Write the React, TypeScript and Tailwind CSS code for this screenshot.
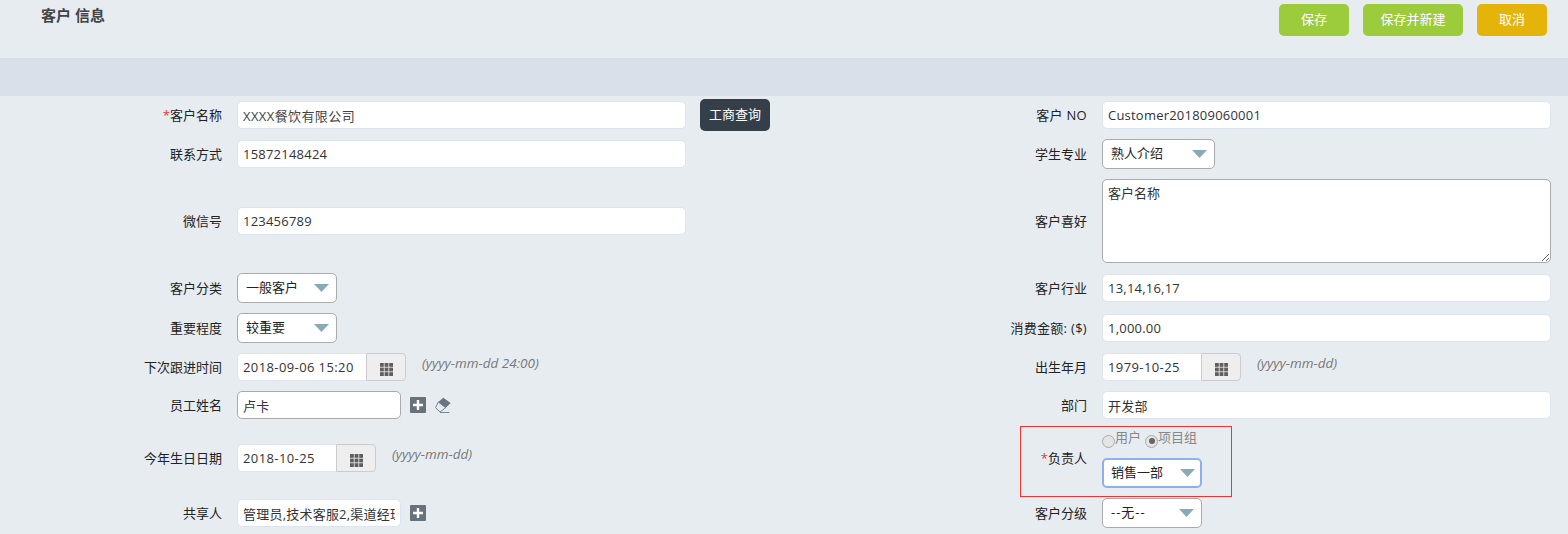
function Row({ h, left, right, label, rightLabel, req, wideRight }: any) {
  return (
    <div className={`flex items-center ${h}`}>
      <div className="flex items-center w-[865px] shrink-0">
        <Label text={label} req={req} />
        <div className="ml-[15px] flex items-center">{left}</div>
      </div>
      <Label text={rightLabel} wide={wideRight} />
      <div className="ml-[15px] flex items-center">{right}</div>
    </div>
  );
}

function Label({ text, req, wide }: { text: string; req?: boolean; wide?: boolean }) {
  return (
    <label className={`w-[222px] shrink-0 text-right text-[13px] leading-5 text-[#222] ${wide ? "tracking-[0.3px]" : ""}`}>
      {req && <span className="text-[#f03434]">*</span>}
      {text}
    </label>
  );
}

function TextInput({ value, w = "w-[449px]", dark, muted }: { value: string; w?: string; dark?: boolean; muted?: boolean }) {
  return (
    <input
      readOnly
      value={value}
      className={`${w} h-7 rounded-[5px] border bg-white px-[5px] text-[13px] outline-none ${muted ? "tracking-[0.4px] text-[#444]" : "tracking-[0.22px] text-[#333]"} ${dark ? "border-[#aaaaaa]" : "border-[#dde4ee]"}`}
    />
  );
}

function Select({ value, w = "w-[100px]", focus, wide }: { value: string; w?: string; focus?: boolean; wide?: boolean }) {
  return (
    <div className={`${w} flex h-[30px] items-center justify-between rounded-[5px] bg-white text-[13px] text-[#222] ${focus ? "border-2 border-[#8fb0ee] pl-[7px] pr-[5px]" : "border border-[#aaaaaa] pl-2 pr-[7px]"}`}>
      <span className={wide ? "tracking-[1px]" : ""}>{value}</span>
      <svg width="15" height="8" viewBox="0 0 15 8"><path d="M0 0h15L7.5 8z" fill="#8aa9b6" /></svg>
    </div>
  );
}

function GridIcon() {
  return (
    <svg className="mt-1" width="13" height="13" viewBox="0 0 13 13" fill="#5f5f5f">
      {[0, 4.6, 9.2].map(y => [0, 4.6, 9.2].map(x => <rect key={`${x}-${y}`} x={x} y={y} width="3.8" height="3.8" />))}
    </svg>
  );
}

function DateInput({ value, w, hint }: { value: string; w: string; hint: string }) {
  return (
    <>
      <input
        readOnly
        value={value}
        className={`${w} h-7 rounded-l-[5px] border border-r-0 border-[#dde4ee] bg-white px-[5px] text-[13px] tracking-[0.4px] text-[#333] outline-none`}
      />
      <span className="flex h-7 w-10 items-center justify-center rounded-r-[4px] border border-[#cccccc] bg-[#eeeeee]">
        <GridIcon />
      </span>
      <span className="mb-2 ml-4 text-[13.5px] italic text-[#777]">{hint}</span>
    </>
  );
}

function PlusBox() {
  return (
    <span className="ml-[9px] flex h-4 w-4 items-center justify-center rounded-[1px] bg-[#68727d]">
      <svg width="10" height="10" viewBox="0 0 10 10"><path d="M3.8 0h2.4v3.8H10v2.4H6.2V10H3.8V6.2H0V3.8h3.8z" fill="#fff" /></svg>
    </span>
  );
}

function Eraser() {
  return (
    <svg className="ml-[9px]" width="16" height="16" viewBox="0 0 16 16">
      <path d="M3.3 5 .5 10.7 5 15l5.7-4.3z" fill="none" stroke="#7d8690" strokeWidth="1" />
      <path d="M8.3.7 15.7 6l-5 4.7L3.3 5z" fill="#6b7580" />
      <path d="M5 15.5h9.5" stroke="#7d8690" strokeWidth="1" />
    </svg>
  );
}

function Radio({ on }: { on?: boolean }) {
  return (
    <span className="mt-[6px] flex h-[13px] w-[13px] items-center justify-center rounded-full border border-[#aaaaaa] bg-[#e4e4e4]">
      {on && <span className="h-[6px] w-[6px] rounded-full bg-[#666]" />}
    </span>
  );
}

export default function App() {
  return (
    <div
      className="h-[534px] w-[1568px] overflow-hidden bg-[#e7ecf1]"
      style={{ fontFamily: '"Open Sans", "Noto Sans CJK SC", sans-serif' }}
    >
      <header className="flex h-[58px] items-start justify-between pl-[41px] pr-[21px]">
        <h1 className="mt-[5px] text-[15px] font-bold leading-5 text-[#444]">客户 信息</h1>
        <div className="mt-1 flex gap-[14px]">
          <button className="h-8 w-[70px] rounded-[5px] bg-[#9ccb3b] text-[13px] text-white">保存</button>
          <button className="h-8 w-[100px] rounded-[5px] bg-[#9ccb3b] text-[13px] text-white">保存并新建</button>
          <button className="h-8 w-[70px] rounded-[5px] bg-[#e5b40a] text-[13px] text-white">取消</button>
        </div>
      </header>
      <div className="h-[38px] bg-[#d9e0ea]" />

      <Row
        h="h-[38px]"
        label="客户名称"
        req
        left={
          <>
            <TextInput value="XXXX餐饮有限公司" muted />
            <button className="ml-[14px] h-8 w-[70px] rounded-[5px] bg-[#353f4a] text-[13px] text-white">工商查询</button>
          </>
        }
        rightLabel="客户 NO"
        wideRight
        right={<TextInput value="Customer201809060001" />}
      />
      <Row
        h="h-[40px]"
        label="联系方式"
        left={<TextInput value="15872148424" />}
        rightLabel="学生专业"
        right={<Select value="熟人介绍" w="w-[113px]" />}
      />
      <Row
        h="h-[94px]"
        label="微信号"
        left={<TextInput value="123456789" />}
        rightLabel="客户喜好"
        right={
          <textarea
            readOnly
            value="客户名称"
            className="block h-[84px] w-[449px] rounded-[5px] border border-[#aaaaaa] bg-white p-[5px] pt-1 text-[13px] leading-[18px] text-[#333] outline-none"
          />
        }
      />
      <Row
        h="h-[40px]"
        label="客户分类"
        left={<Select value="一般客户" />}
        rightLabel="客户行业"
        right={<TextInput value="13,14,16,17" />}
      />
      <Row
        h="h-[40px]"
        label="重要程度"
        left={<Select value="较重要" />}
        rightLabel="消费金额: ($)"
        wideRight
        right={<TextInput value="1,000.00" />}
      />
      <Row
        h="h-[38px]"
        label="下次跟进时间"
        left={<DateInput value="2018-09-06 15:20" w="w-[129px]" hint="(yyyy-mm-dd 24:00)" />}
        rightLabel="出生年月"
        right={<DateInput value="1979-10-25" w="w-[99px]" hint="(yyyy-mm-dd)" />}
      />
      <Row
        h="h-[38px]"
        label="员工姓名"
        left={
          <>
            <TextInput value="卢卡" w="w-[164px]" dark />
            <PlusBox />
            <Eraser />
          </>
        }
        rightLabel="部门"
        right={<TextInput value="开发部" />}
      />

      <div className="mt-[2px] flex h-[71px] items-center">
        <div className="flex w-[865px] shrink-0 items-center pb-[7px]">
          <Label text="今年生日日期" />
          <div className="ml-[15px] flex items-center">
            <DateInput value="2018-10-25" w="w-[99px]" hint="(yyyy-mm-dd)" />
          </div>
        </div>
        <div className="ml-[155px] flex h-[71px] w-[212px] items-start border border-[#f03434]">
          <div className="mt-[21px] w-[66px] shrink-0 text-right text-[13px] leading-5 text-[#222]">
            <span className="text-[#f03434]">*</span>负责人
          </div>
          <div className="ml-[15px] mt-px flex flex-col">
            <div className="flex h-5 items-center text-[13px] text-[#888]">
              <Radio />
              <span>用户</span>
              <span className="ml-1 flex items-center"><Radio on /></span>
              <span>项目组</span>
            </div>
            <div className="mt-[10px]">
              <Select value="销售一部" focus />
            </div>
          </div>
        </div>
      </div>

      <Row
        h="h-[32px]"
        label="共享人"
        left={
          <>
            <TextInput value="管理员,技术客服2,渠道经理,销售主管" w="w-[164px]" />
            <PlusBox />
          </>
        }
        rightLabel="客户分级"
        right={<Select value="--无--" wide />}
      />
    </div>
  );
}
